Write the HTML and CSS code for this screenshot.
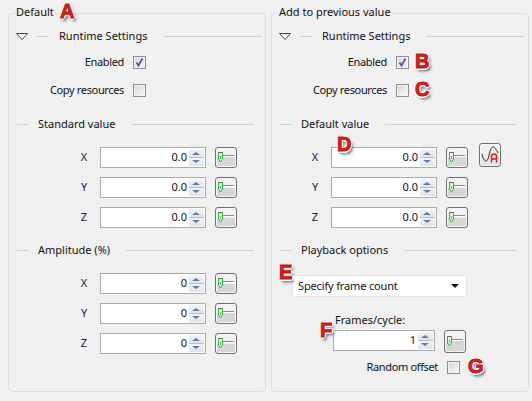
FILE: index.html
```html
<!DOCTYPE html>
<html lang="en">
<head>
<meta charset="utf-8">
<title>Runtime settings</title>
<link rel="stylesheet" href="styles.css">
</head>
<body>
<svg class="defs" width="0" height="0" aria-hidden="true">
  <symbol id="slider" viewBox="0 0 20 19">
    <path d="M7 7.500h11" stroke="#8a8a8a" fill="none"/>
    <path d="M7 8.500h11" stroke="#fff" fill="none"/>
    <path d="M2.500 4.500h4v6.500l-2 3-2-3z" fill="#e4f2e0" stroke="#3fae3f"/>
    <path d="M2.500 4.500h4" stroke="#5a6a5a" fill="none"/>
    <path d="M4 8h1v3H4z" fill="#4fbf4f"/>
  </symbol>
  <symbol id="tick" viewBox="0 0 11 11">
    <path d="M2.500 5.500l2 3 4-7" fill="none" stroke="#4a5fa8" stroke-width="1.800"/>
  </symbol>
  <symbol id="tri" viewBox="0 0 12 7">
    <path d="M.5.500h11L6 6.500z" fill="#fff" stroke="#444"/>
  </symbol>
</svg>
<main class="panels">
  <section class="panel">
    <h2 class="legend">Default</h2>
    <div class="head head-runtime"><svg class="tri"><use href="#tri"/></svg><i class="rule lead"></i><span class="head-text">Runtime Settings</span><i class="rule"></i></div>
    <div class="check-row first"><span class="check-label">Enabled</span><span class="check"><svg><use href="#tick"/></svg></span></div>
    <div class="check-row second"><span class="check-label">Copy resources</span><span class="check"></span></div>
    <div class="head head-std"><i class="rule lead"></i><span class="head-text">Standard value</span><i class="rule"></i></div>
    <div class="row row-first"><span class="axis">X</span><div class="field"><span class="val">0.0</span><span class="spin"><b class="up"></b><b class="down"></b></span></div><button class="btn"><svg><use href="#slider"/></svg></button></div>
    <div class="row"><span class="axis">Y</span><div class="field"><span class="val">0.0</span><span class="spin"><b class="up"></b><b class="down"></b></span></div><button class="btn"><svg><use href="#slider"/></svg></button></div>
    <div class="row"><span class="axis">Z</span><div class="field"><span class="val">0.0</span><span class="spin"><b class="up"></b><b class="down"></b></span></div><button class="btn"><svg><use href="#slider"/></svg></button></div>
    <div class="head head-mid"><i class="rule lead"></i><span class="head-text">Amplitude (%)</span><i class="rule"></i></div>
    <div class="row row-first"><span class="axis">X</span><div class="field"><span class="val">0</span><span class="spin"><b class="up"></b><b class="down"></b></span></div><button class="btn"><svg><use href="#slider"/></svg></button></div>
    <div class="row"><span class="axis">Y</span><div class="field"><span class="val">0</span><span class="spin"><b class="up"></b><b class="down"></b></span></div><button class="btn"><svg><use href="#slider"/></svg></button></div>
    <div class="row"><span class="axis">Z</span><div class="field"><span class="val">0</span><span class="spin"><b class="up"></b><b class="down"></b></span></div><button class="btn"><svg><use href="#slider"/></svg></button></div>
  </section>
  <section class="panel panel-right">
    <h2 class="legend">Add to previous value</h2>
    <div class="head head-runtime"><svg class="tri"><use href="#tri"/></svg><i class="rule lead"></i><span class="head-text">Runtime Settings</span><i class="rule"></i></div>
    <div class="check-row first"><span class="check-label">Enabled</span><span class="check"><svg><use href="#tick"/></svg></span></div>
    <div class="check-row second"><span class="check-label">Copy resources</span><span class="check"></span></div>
    <div class="head head-std"><i class="rule lead"></i><span class="head-text">Default value</span><i class="rule"></i></div>
    <div class="row row-first"><span class="axis">X</span><div class="field"><span class="val">0.0</span><span class="spin"><b class="up"></b><b class="down"></b></span></div><button class="btn"><svg><use href="#slider"/></svg></button>
      <button class="btn btn-curve"><svg viewBox="0 0 20 22"><path d="M2 10c1 5 2.500 7 4 7s2.500-3 3.500-7.500S11.500 3 13 3s3 2 5 6" fill="none" stroke="#222"/><path d="M11.500 18.500v-6q0-2.500 2.500-2.500t2.500 2.500v6M11.500 15h5" fill="none" stroke="#e01818" stroke-width="1.400"/></svg></button></div>
    <div class="row"><span class="axis">Y</span><div class="field"><span class="val">0.0</span><span class="spin"><b class="up"></b><b class="down"></b></span></div><button class="btn"><svg><use href="#slider"/></svg></button></div>
    <div class="row"><span class="axis">Z</span><div class="field"><span class="val">0.0</span><span class="spin"><b class="up"></b><b class="down"></b></span></div><button class="btn"><svg><use href="#slider"/></svg></button></div>
    <div class="head head-mid"><i class="rule lead"></i><span class="head-text">Playback options</span><i class="rule"></i></div>
    <div class="select"><span>Specify frame count</span><b class="caret"></b></div>
    <div class="frames-label">Frames/cycle:</div>
    <div class="row frames"><div class="field field-short"><span class="val">1</span><span class="spin"><b class="up"></b><b class="down"></b></span></div><button class="btn btn-tall"><svg><use href="#slider"/></svg></button></div>
    <div class="check-row random"><span class="check-label">Random offset</span><span class="check"></span></div>
  </section>
</main>
<span class="mark mark-a">A</span>
<span class="mark mark-b">B</span>
<span class="mark mark-c">C</span>
<span class="mark mark-d">D</span>
<span class="mark mark-e">E</span>
<span class="mark mark-f">F</span>
<span class="mark mark-g">G</span>
</body>
</html>
```
FILE: styles.css
```css
* { box-sizing: border-box; }
html, body { margin: 0; padding: 0; }
body {
  width: 532px;
  height: 401px;
  overflow: hidden;
  position: relative;
  background: #f0f0f0;
  color: #111;
  font: 11px/14px "Noto Sans", sans-serif;
}
.defs { position: absolute; }
.panels { display: flex; gap: 5px; padding: 13px 3px 0 8px; }
.panel {
  width: 258px;
  height: 379px;
  border: 1px solid #d5dfe5;
  border-radius: 4px;
}
.legend {
  width: fit-content;
  height: 16px;
  margin: -10px 0 0 6px;
  padding: 1px 1px;
  background: #f0f0f0;
  font: inherit;
}
.head { display: flex; align-items: center; height: 16px; margin-top: 14px; padding: 0 11px 0 8px; }
.head-runtime { margin-top: 8px; padding: 0 3px 0 7px; }
.head-std { margin-top: 19px; }
.rule { flex: 1; height: 1px; margin-left: 16px; background: #d0d0d0; }
.rule.lead { flex: 0 0 12px; margin: 0 9px 0 0; }
.head-runtime .rule.lead { margin-left: 9px; margin-right: 10px; }
.tri { width: 12px; height: 7px; display: block; }
.check-row { display: flex; align-items: center; justify-content: flex-end; height: 14px; padding-right: 119px; }
.first { margin-top: 11px; }
.second { margin-top: 14px; }
.check-label { margin-right: 9px; letter-spacing: -0.35px; }
.check {
  width: 13px;
  height: 13px;
  border: 1px solid #8e8f8f;
  background: linear-gradient(135deg, #d8d8d8, #f6f6f6);
  box-shadow: inset 0 0 0 1px #f4f4f4;
}
.check svg { display: block; width: 11px; height: 11px; }
.row { display: flex; align-items: flex-start; height: 21px; margin-top: 9px; padding-left: 63px; }
.row-first { margin-top: 15px; }
.axis { width: 24px; margin-right: 4px; line-height: 20px; text-align: center; color: #101a40; }
.panel-right .row { padding-left: 31px; }
.field {
  display: flex;
  justify-content: flex-end;
  width: 106px;
  height: 21px;
  border: 1px solid #ababab;
  background: #fff;
  padding: 1px;
}
.val { line-height: 16px; margin-right: 2px; }
.spin { display: flex; flex-direction: column; gap: 1px; width: 15px; background: #bcbcc0; }
.spin b { flex: 1; position: relative; background: linear-gradient(#f2f4f8, #dfe2ea); }
.spin b::after {
  content: "";
  position: absolute;
  left: 3px;
  top: 3px;
  border: 4px solid transparent;
  border-top: 0;
  border-bottom: 3px solid #6478b0;
}
.spin .down::after { top: 2px; border-bottom: 0; border-top: 3px solid #6478b0; }
.btn {
  display: block;
  flex: none;
  width: 22px;
  height: 21px;
  margin: 0 0 0 9px;
  padding: 0;
  border: 1px solid #707070;
  border-radius: 3px;
  background: linear-gradient(#f2f2f2 0 50%, #d6d6d6 50% 100%);
  box-shadow: inset 0 0 0 1px #f6f6f6;
}
.btn svg { display: block; width: 20px; height: 19px; }
.btn-curve { width: 22px; height: 24px; margin: -4px 0 0 11px; background: linear-gradient(#f4f4f4, #e2e2e2); }
.btn-curve svg { width: 20px; height: 22px; }
.select {
  display: flex;
  align-items: center;
  justify-content: space-between;
  width: 175px;
  height: 22px;
  margin: 17px 0 0 20px;
  padding: 0 7px 0 5px;
  background: #fff;
  border: 1px solid #e4e4e4;
  border-radius: 2px;
  letter-spacing: -0.15px;
}
.caret { border: 4px solid transparent; border-top: 4px solid #111; border-bottom: 0; }
.frames-label { margin: 16px 0 0 63px; }
.panel-right .frames { margin-top: 3px; padding-left: 61px; height: 23px; }
.field-short { width: 102px; }
.btn-tall { height: 23px; }
.btn-tall svg { height: 21px; }
.random { margin-top: 7px; padding-right: 68px; }
.mark {
  position: absolute;
  color: #d8221c;
  font: bold 20px/20px "Liberation Sans", sans-serif;
  -webkit-text-stroke: 1px #c01810;
  text-shadow: 1.500px 0 0 #fff, -1.500px 0 0 #fff, 0 1.500px 0 #fff, 0 -1.500px 0 #fff, 1px 1px 0 #fff, -1px -1px 0 #fff, 1px -1px 0 #fff, -1px 1px 0 #fff, 2px 3px 3px #3a5468;
}
.mark-a { left: 60px; top: 1px; }
.mark-b { left: 415px; top: 51px; }
.mark-c { left: 415px; top: 79px; }
.mark-d { left: 337px; top: 134px; }
.mark-e { left: 279px; top: 262px; }
.mark-f { left: 320px; top: 320px; }
.mark-g { left: 468px; top: 356px; }
```
